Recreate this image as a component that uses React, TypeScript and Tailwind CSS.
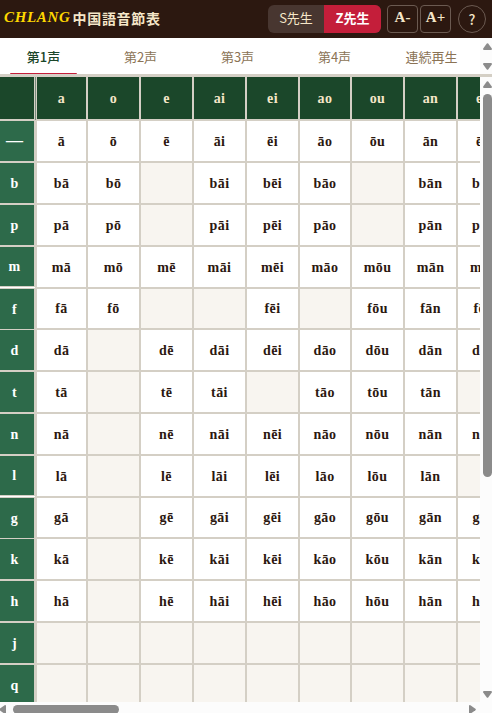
import { FC } from "react";

const finals = ["a", "o", "e", "ai", "ei", "ao", "ou", "an", "en"];

// "" = no such syllable
const rows: { initial: string; h: string; cells: string[] }[] = [
  { initial: "—", h: "h-[42px]", cells: ["ā", "ō", "ē", "āi", "ēi", "āo", "ōu", "ān", "ēn"] },
  { initial: "b", h: "h-[42px]", cells: ["bā", "bō", "", "bāi", "bēi", "bāo", "", "bān", "bēn"] },
  { initial: "p", h: "h-[42px]", cells: ["pā", "pō", "", "pāi", "pēi", "pāo", "", "pān", "pēn"] },
  { initial: "m", h: "h-[42px]", cells: ["mā", "mō", "mē", "māi", "mēi", "māo", "mōu", "mān", "mēn"] },
  { initial: "f", h: "h-[41px]", cells: ["fā", "fō", "", "", "fēi", "", "fōu", "fān", "fēn"] },
  { initial: "d", h: "h-[42px]", cells: ["dā", "", "dē", "dāi", "dēi", "dāo", "dōu", "dān", "dēn"] },
  { initial: "t", h: "h-[42px]", cells: ["tā", "", "tē", "tāi", "", "tāo", "tōu", "tān", ""] },
  { initial: "n", h: "h-[42px]", cells: ["nā", "", "nē", "nāi", "nēi", "nāo", "nōu", "nān", "nēn"] },
  { initial: "l", h: "h-[42px]", cells: ["lā", "", "lē", "lāi", "lēi", "lāo", "lōu", "lān", ""] },
  { initial: "g", h: "h-[41px]", cells: ["gā", "", "gē", "gāi", "gēi", "gāo", "gōu", "gān", "gēn"] },
  { initial: "k", h: "h-[42px]", cells: ["kā", "", "kē", "kāi", "kēi", "kāo", "kōu", "kān", "kēn"] },
  { initial: "h", h: "h-[42px]", cells: ["hā", "", "hē", "hāi", "hēi", "hāo", "hōu", "hān", "hēn"] },
  { initial: "j", h: "h-[42px]", cells: ["", "", "", "", "", "", "", "", ""] },
  { initial: "q", h: "h-[42px]", cells: ["", "", "", "", "", "", "", "", ""] },
];

const tabs = ["第1声", "第2声", "第3声", "第4声", "連続再生"];

const columns = "grid w-[511px] grid-cols-[37px_51px_53px_53px_53px_53px_52px_53px_53px_53px]";

const labelStyle = (initial: string) => {
  if (initial === "m" || initial === "l") {
    return "relative border-b-[3px] after:absolute after:-bottom-[2px] after:left-0 after:h-px after:w-[35px] after:bg-white";
  }
  if (initial === "f" || initial === "g") return "border-b pt-px";
  if (initial === "—") return "border-b-2 text-[17px] tracking-normal";
  return "border-b-2";
};

const Arrow: FC<{ className: string }> = ({ className }) => (
  <svg viewBox="0 0 9 7" className={`shrink-0 ${className}`}>
    <path d="M3.8 0.6 Q4.5 -0.3 5.2 0.6 L8.8 5.6 Q9.2 7 8 7 H1 Q-0.2 7 0.2 5.6 Z" fill="#8b8b8b" />
  </svg>
);

const Header = () => (
  <header className="flex h-[38px] shrink-0 items-center bg-[#2c1810] pr-[6px] pl-1">
    <h1 className="flex items-center pb-[3px] whitespace-nowrap">
      <span className="w-[68.5px] font-['Liberation_Serif',serif] text-[15px] font-bold tracking-[0.65px] text-[#ffd700] italic">CHLANG</span>
      <span className="font-['Noto_Sans_CJK_JP',sans-serif] text-[14px] leading-5 font-bold tracking-[0.7px] text-[#f5e6c8]">中国語音節表</span>
    </h1>
    <div className="ml-auto flex h-7 w-[113px] overflow-hidden rounded-md bg-[#483630] font-['Noto_Sans_CJK_JP',sans-serif] text-[13px] leading-[26px]">
      <button className="w-14 pb-[2px] text-[#f5e6c8]">S先生</button>
      <button className="w-[57px] bg-[#c41e3a] pb-[2px] font-bold text-white">Z先生</button>
    </div>
    <div className="ml-[6px] flex gap-[2px] font-['Liberation_Serif',serif] text-[15px] font-bold text-[#f5e6c8]">
      <button className="h-7 w-[31px] rounded border border-[#6b5a51] pb-[3px]">A-</button>
      <button className="h-7 w-[31px] rounded border border-[#6b5a51] pb-[3px]">A+</button>
    </div>
    <button className="ml-[7px] size-7 rounded-full border border-[#6b5a51] font-['Noto_Sans_CJK_JP',sans-serif] text-[14px] leading-[24px] font-medium text-[#f5e6c8]">?</button>
  </header>
);

const App = () => {
  return (
    <div className="flex h-[713px] w-[492px] flex-col overflow-hidden bg-white">
      <Header />
      <nav className="flex h-[39px] shrink-0 border-b-[3px] border-[#d4cfc5]">
        <div className="flex w-[480px] overflow-hidden font-['Noto_Sans_CJK_JP',sans-serif] text-[13px] leading-[38px] text-[#8b7355]">
          {tabs.map((tab, i) => (
            <button key={tab} className={i === 0 ? "relative mr-[5px] w-[87px] shrink-0 font-medium text-[#1b472a]" : "w-[97px] shrink-0"}>
              {tab}
              {i === 0 && <span className="absolute bottom-0 left-[10px] h-px w-[67px] rounded-t-sm bg-[#c41e3a]" />}
            </button>
          ))}
        </div>
        <div className="flex w-3 flex-col items-end justify-between bg-[#fcfcfc] pt-[5px] pb-1">
          <Arrow className="h-[7px] w-[9px]" />
          <Arrow className="h-[7px] w-[9px] rotate-180" />
        </div>
      </nav>

      <div className="flex h-[625px] shrink-0">
        <div className="w-[480px] overflow-hidden font-['Liberation_Serif',serif] text-[14px] font-bold tracking-[0.4px] text-[#2c1810]">
          <div className={columns}>
            <div className="relative h-11 border-r-[3px] border-b-2 border-[#d4cfc5] bg-[#1b472a] after:absolute after:top-0 after:-right-[2px] after:h-[43px] after:w-px after:bg-[#788b7b]" />
            {finals.map((item) => (
              <div key={item} className="flex h-11 items-center justify-center border-r-2 border-b-2 border-[#d4cfc5] bg-[#1b472a] text-[#f5e6c8]">
                {item}
              </div>
            ))}
          </div>
          {rows.map((row) => (
            <div key={row.initial} className={`${columns} ${row.h}`}>
              <div className={`flex items-center justify-center border-r-[3px] border-[#d4cfc5] bg-[#2d6a4a] pr-[5px] text-white ${labelStyle(row.initial)}`}>{row.initial}</div>
              {row.cells.map((cell, index) => (
                <div key={index} className={`flex items-center justify-center border-r-2 border-b-2 border-[#d4cfc5] ${cell ? "bg-white" : "bg-[#f8f5f0]"}`}>
                  {cell}
                </div>
              ))}
            </div>
          ))}
        </div>
        <div className="flex w-3 flex-col items-end bg-[#fcfcfc] pt-1 pb-1">
          <Arrow className="h-[7px] w-[9px]" />
          <div className="mt-[6px] h-[383px] w-[9px] shrink-0 rounded-full bg-[#8b8b8b]" />
          <Arrow className="mt-auto h-[7px] w-[9px] rotate-180" />
        </div>
      </div>

      <div className="flex h-[11px] shrink-0 items-start bg-[#fcfcfc] pt-[3px]">
        <Arrow className="mt-px -ml-[2px] h-[7px] w-[9px] -rotate-90" />
        <div className="ml-[6px] h-[9px] w-[106px] rounded-full bg-[#8b8b8b]" />
        <Arrow className="mt-px mr-[15px] ml-auto h-[7px] w-[9px] rotate-90" />
      </div>
    </div>
  );
};

export default App;
